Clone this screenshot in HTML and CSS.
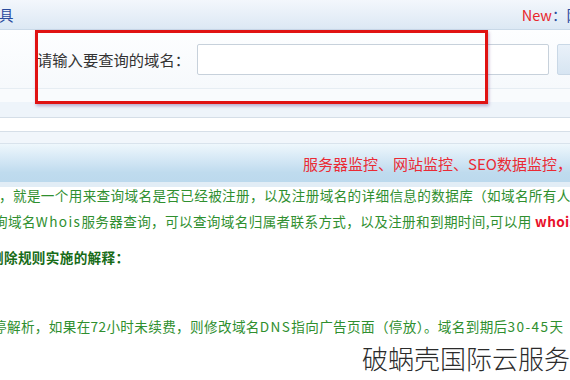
FILE: index.html
```html
<!DOCTYPE html>
<html lang="zh-CN">
<head>
<meta charset="utf-8">
<title>域名查询</title>
<link rel="stylesheet" href="styles.css">
</head>
<body>
<div class="page">
  <div class="topbar">
    <span class="tool">具</span>
    <span class="news"><span class="new">New</span><span class="colon">：</span><span class="more">网</span></span>
  </div>
  <div class="form-row">
    <label class="label" for="domain">请输入要查询的域名：</label>
    <input class="input" id="domain" type="text">
    <span class="btn"></span>
  </div>
  <div class="stripe s1"></div>
  <div class="stripe s2"></div>
  <div class="stripe s3"></div>
  <div class="stripe s4"></div>
  <div class="banner"><span class="banner-text">服务器监控、网站监控、SEO数据监控，网站安全</span></div>
  <div class="banner-foot"></div>
  <div class="content">
    <div class="line l1">，就是一个用来查询域名是否已经被注册，以及注册域名的详细信息的数据库（如域名所有人、注册商）</div>
    <div class="line l2">询域名<span class="lat">Whois</span>服务器查询，可以查询域名归属者联系方式，以及注册和到期时间,可以用 <b class="red">whois</b></div>
    <div class="line l3 strong">删除规则实施的解释：</div>
    <div class="line l4">停解析，如果在72小时未续费，则修改域名<span class="lat">DNS</span>指向广告页面（停放）。域名到期后<span class="lat">30-45</span>天</div>
  </div>
  <div class="watermark">破蜗壳国际云服务</div>
</div>
</body>
</html>
```
FILE: styles.css
```css
html, body {
  margin: 0;
  padding: 0;
  background: #ffffff;
}
.page {
  position: relative;
  width: 570px;
  height: 380px;
  overflow: hidden;
  font-family: "Noto Sans CJK SC", "Noto Sans", sans-serif;
}
.topbar {
  height: 29px;
  border-bottom: 1px solid #c9d9e8;
  background: linear-gradient(#f3f7fc, #dce8f4);
  display: flex;
  align-items: center;
  justify-content: space-between;
  white-space: nowrap;
}
.tool {
  color: #2a4c9e;
  font-size: 14.5px;
  margin-left: -1px;
}
.news {
  font-size: 14.5px;
  margin-right: -11px;
}
.new { color: #e8262c; }
.colon { color: #2a4c9e; }
.more { color: #2a4c9e; }

.form-row {
  height: 58px;
  background: linear-gradient(#fdfeff, #f6f9fc);
  border-bottom: 1px solid #e6edf3;
  display: flex;
  align-items: center;
  padding-left: 37px;
  white-space: nowrap;
}
.form-row > * { flex-shrink: 0; }
.label {
  color: #333333;
  font-size: 15.3px;
}
.input {
  margin: 0 0 0 7px;
  box-sizing: border-box;
  width: 352px;
  height: 31px;
  border: 1px solid #c7d1db;
  border-radius: 2px;
  background: #ffffff;
  padding: 0 4px;
}
.btn {
  margin-left: 8px;
  width: 40px;
  height: 31px;
  box-sizing: border-box;
  border: 1px solid #c9d8e6;
  border-radius: 2px;
  background: linear-gradient(#e9f1f9, #d7e5f2);
}
.stripe { box-sizing: border-box; }
.s1 { height: 13px; background: #f9fbfd; }
.s2 { height: 16px; background: #eef4fa; border-bottom: 1px solid #d5dee7; }
.s3 { height: 14px; background: #ffffff; border-bottom: 1px solid #d6dfe8; }
.s4 { height: 12px; background: #f1f6fb; border-bottom: 1px solid #d9e3ec; }
.banner {
  height: 38px;
  background: linear-gradient(#eef7fc 0%, #d5e8f5 40%, #bfdbee 75%, #bcd9ed 100%);
  display: flex;
  align-items: center;
  padding-left: 303px;
  white-space: nowrap;
  overflow: hidden;
}
.banner-text {
  color: #ea2a34;
  font-size: 15px;
}
.banner-foot {
  height: 5px;
  background: #e2edf6;
}
.content {
  margin-top: -5px;
  color: #2f8f2f;
  font-size: 13.6px;
  letter-spacing: 0.35px;
}
.line {
  white-space: nowrap;
  height: 26px;
  line-height: 26px;
}
.l1 { margin-left: -1px; }
.l2 { margin-left: -6px; }
.l3 { margin-left: -10px; margin-top: 10px; }
.l4 { margin-left: -7px; margin-top: 43px; }
.lat { letter-spacing: 1.4px; }
.strong {
  font-weight: 700;
  color: #176b17;
}
.red {
  color: #e8102a;
  font-weight: 700;
}
.watermark {
  position: absolute;
  right: 0;
  bottom: 6px;
  font-size: 26px;
  font-weight: 300;
  color: #2b2b2b;
  white-space: nowrap;
  line-height: 32px;
}
.page::after {
  content: "";
  position: absolute;
  left: 35px;
  top: 30px;
  width: 453px;
  height: 74px;
  box-sizing: border-box;
  border: 3px solid #e01212;
  box-shadow: 1px 2px 3px rgba(90, 40, 120, 0.35);
}
```
